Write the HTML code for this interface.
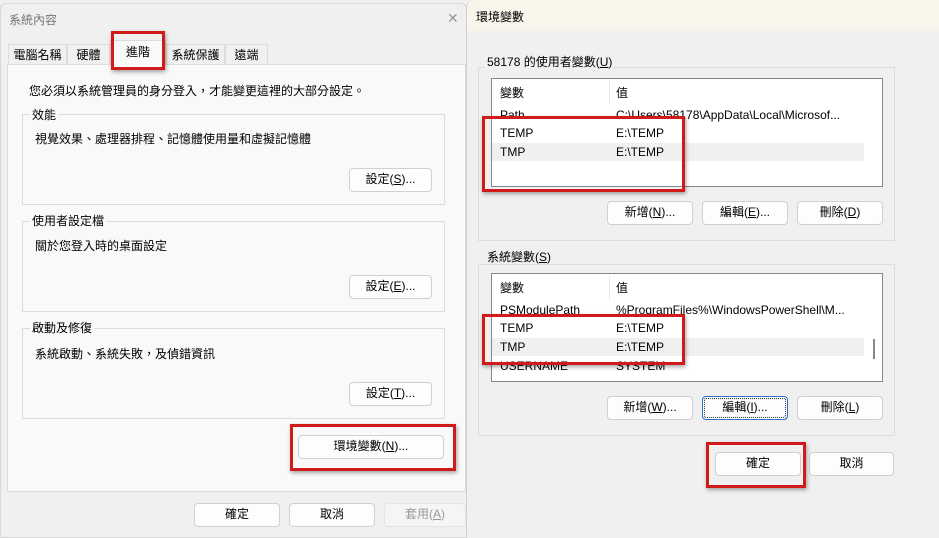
<!DOCTYPE html>
<html><head><meta charset="utf-8"><style>
*{box-sizing:border-box;margin:0;padding:0}
body{width:939px;height:538px;overflow:hidden;background:#f0f0f0;font-family:"Liberation Sans","Noto Sans CJK TC",sans-serif;font-size:12px;color:#000;position:relative}
.a{position:absolute}
.btn{position:absolute;background:#fdfdfd;border:1px solid #d0d0d0;border-radius:4px;text-align:center;line-height:21px;font-size:12px}
.grp{position:absolute;border:1px solid #dcdcdc}
.lbl{position:absolute;background:inherit;padding:0 2px;line-height:14px}
.red{position:absolute;border:3px solid #d11a1a;box-shadow:1px 2px 4px rgba(0,0,0,.35)}
.list{position:absolute;background:#fff;border:1px solid #828790}
.row{position:absolute;left:0;height:18px;line-height:18px;width:372px}
.row span{position:absolute}
</style></head><body>
<!-- left window -->
<div class="a" style="left:0;top:3;top:3px;width:467px;height:535px;background:#f0f0f0;border:1px solid #d8d8d8;border-radius:6px 6px 0 0"></div>
<div class="a" style="left:9px;top:11px;color:#777;font-size:12px">系統內容</div>
<div class="a" style="left:447px;top:10px;color:#999;font-size:14px">✕</div>
<!-- tabs -->
<div class="a" style="left:7px;top:64px;width:459px;height:428px;background:#f9f9f9;border:1px solid #dcdcdc"></div>
<div class="a" style="left:8px;top:44px;width:59px;height:21px;border:1px solid #dcdcdc;border-bottom:none;text-align:center;line-height:20px">電腦名稱</div>
<div class="a" style="left:67px;top:44px;width:43px;height:21px;border:1px solid #dcdcdc;border-bottom:none;text-align:center;line-height:20px">硬體</div>
<div class="a" style="left:110px;top:40px;width:56px;height:25px;background:#f9f9f9;border:1px solid #dcdcdc;border-bottom:none;text-align:center;line-height:22px">進階</div>
<div class="a" style="left:166px;top:44px;width:59px;height:21px;border:1px solid #dcdcdc;border-bottom:none;text-align:center;line-height:20px">系統保護</div>
<div class="a" style="left:225px;top:44px;width:43px;height:21px;border:1px solid #dcdcdc;border-bottom:none;text-align:center;line-height:20px">遠端</div>
<div class="red" style="left:111px;top:31px;width:54px;height:39px"></div>
<div class="a" style="left:29px;top:82px">您必須以系統管理員的身分登入，才能變更這裡的大部分設定。</div>
<div class="grp" style="left:22px;top:114px;width:423px;height:91px;background:#f9f9f9"></div>
<div class="lbl" style="left:30px;top:108px;background:#f9f9f9">效能</div>
<div class="a" style="left:35px;top:130px">視覺效果、處理器排程、記憶體使用量和虛擬記憶體</div>
<div class="btn" style="left:349px;top:168px;width:83px;height:24px">設定(<u>S</u>)...</div>
<div class="grp" style="left:22px;top:221px;width:423px;height:91px"></div>
<div class="lbl" style="left:30px;top:214px;background:#f9f9f9">使用者設定檔</div>
<div class="a" style="left:35px;top:237px">關於您登入時的桌面設定</div>
<div class="btn" style="left:349px;top:275px;width:83px;height:24px">設定(<u>E</u>)...</div>
<div class="grp" style="left:22px;top:328px;width:423px;height:91px"></div>
<div class="lbl" style="left:30px;top:321px;background:#f9f9f9">啟動及修復</div>
<div class="a" style="left:35px;top:345px">系統啟動、系統失敗，及偵錯資訊</div>
<div class="btn" style="left:349px;top:382px;width:83px;height:24px">設定(<u>T</u>)...</div>
<div class="btn" style="left:298px;top:435px;width:146px;height:24px">環境變數(<u>N</u>)...</div>
<div class="red" style="left:290px;top:424px;width:166px;height:47px"></div>
<div class="btn" style="left:194px;top:503px;width:86px;height:24px">確定</div>
<div class="btn" style="left:289px;top:503px;width:86px;height:24px">取消</div>
<div class="btn" style="left:384px;top:503px;width:82px;height:24px;color:#999;background:#f5f5f5;border-color:#e4e4e4">套用(<u>A</u>)</div>
<!-- right window -->
<div class="a" style="left:466px;top:0;width:473px;height:538px;background:#f0f0f0;border-left:1px solid #cfcfcf;border-radius:8px 0 0 0"></div>
<div class="a" style="left:467px;top:0;width:472px;height:31px;background:#f8f5ea;border-radius:8px 0 0 0"></div>
<div class="a" style="left:476px;top:8px">環境變數</div>
<div class="grp" style="left:478px;top:67px;width:417px;height:174px"></div>
<div class="lbl" style="left:485px;top:55px;background:#f0f0f0">58178 的使用者變數(<u>U</u>)</div>
<div class="list" style="left:491px;top:78px;width:392px;height:109px">
 <div class="a" style="left:117px;top:2px;height:24px;border-left:1px solid #e5e5e5"></div>
 <div class="row" style="top:2px;height:24px;line-height:24px"><span style="left:8px">變數</span><span style="left:124px">值</span></div>
 <div class="row" style="top:27px"><span style="left:8px">Path</span><span style="left:124px">C:\Users\58178\AppData\Local\Microsof...</span></div>
 <div class="row" style="top:45px"><span style="left:8px">TEMP</span><span style="left:124px">E:\TEMP</span></div>
 <div class="row" style="top:64px;background:#f0f0f0"><span style="left:8px">TMP</span><span style="left:124px">E:\TEMP</span></div>
</div>
<div class="red" style="left:482px;top:116px;width:203px;height:76px"></div>
<div class="btn" style="left:607px;top:201px;width:86px;height:24px">新增(<u>N</u>)...</div>
<div class="btn" style="left:702px;top:201px;width:86px;height:24px">編輯(<u>E</u>)...</div>
<div class="btn" style="left:797px;top:201px;width:86px;height:24px">刪除(<u>D</u>)</div>
<div class="grp" style="left:478px;top:264px;width:417px;height:172px"></div>
<div class="lbl" style="left:485px;top:250px;background:#f0f0f0">系統變數(<u>S</u>)</div>
<div class="list" style="left:491px;top:273px;width:392px;height:109px;overflow:hidden">
 <div class="a" style="left:117px;top:2px;height:24px;border-left:1px solid #e5e5e5"></div>
 <div class="row" style="top:2px;height:24px;line-height:24px"><span style="left:8px">變數</span><span style="left:124px">值</span></div>
 <div class="row" style="top:27px"><span style="left:8px">PSModulePath</span><span style="left:124px">%ProgramFiles%\WindowsPowerShell\M...</span></div>
 <div class="row" style="top:45px"><span style="left:8px">TEMP</span><span style="left:124px">E:\TEMP</span></div>
 <div class="row" style="top:64px;background:#f0f0f0"><span style="left:8px">TMP</span><span style="left:124px">E:\TEMP</span></div>
 <div class="row" style="top:83px"><span style="left:8px">USERNAME</span><span style="left:124px">SYSTEM</span></div>
 <div class="a" style="left:381px;top:65px;width:2px;height:20px;background:#888"></div>
</div>
<div class="red" style="left:482px;top:314px;width:203px;height:51px"></div>
<div class="btn" style="left:607px;top:396px;width:86px;height:24px">新增(<u>W</u>)...</div>
<div class="btn" style="left:702px;top:396px;width:86px;height:24px;border:1px solid #2a6ebd;outline:1px dotted #333;outline-offset:-3px">編輯(<u>I</u>)...</div>
<div class="btn" style="left:797px;top:396px;width:86px;height:24px">刪除(<u>L</u>)</div>
<div class="btn" style="left:715px;top:452px;width:86px;height:24px">確定</div>
<div class="btn" style="left:809px;top:452px;width:85px;height:24px">取消</div>
<div class="red" style="left:706px;top:442px;width:100px;height:46px"></div>
</body></html>
